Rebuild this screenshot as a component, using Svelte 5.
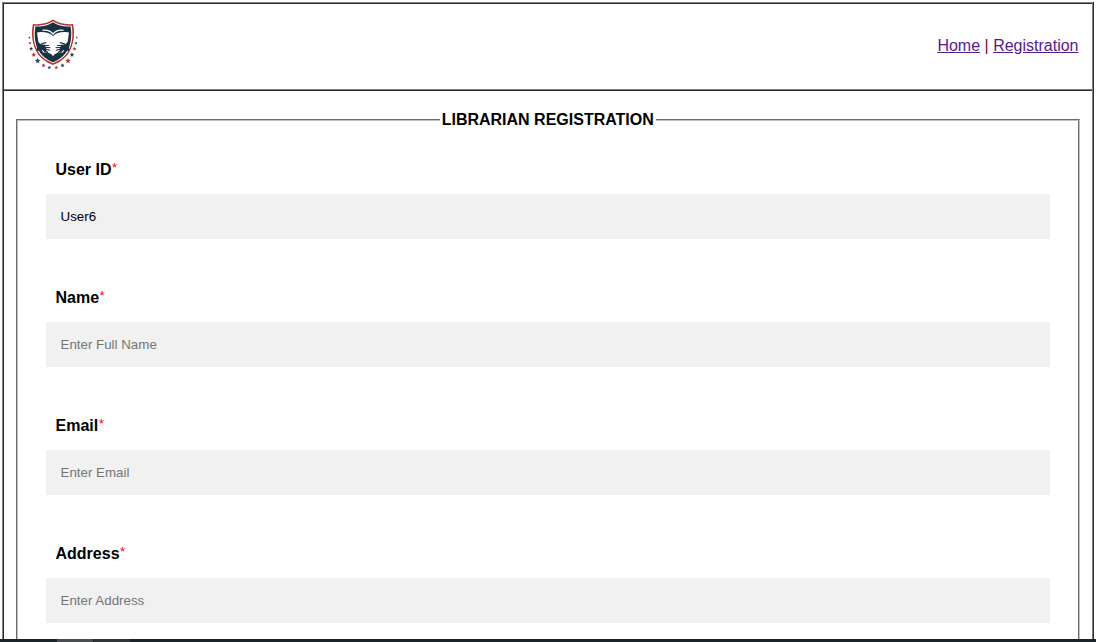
<script>
  const fields = [
    { id: 'userid', label: 'User ID', value: 'User6', placeholder: '' },
    { id: 'name', label: 'Name', value: '', placeholder: 'Enter Full Name' },
    { id: 'email', label: 'Email', value: '', placeholder: 'Enter Email' },
    { id: 'address', label: 'Address', value: '', placeholder: 'Enter Address' }
  ];
  const star = 'M0-1.5.4-.5 1.5-.4.65.3.9 1.4 0 .8-.9 1.4-.65.3-1.5-.4-.4-.5Z';
  const stars = [
    [9.4, 25.5, 0.8, 0], [10, 31, 1.1, 1], [11.2, 36.7, 1.4, 0], [13.7, 42.6, 1.6, 1],
    [17.7, 48.7, 1.9, 0], [23.5, 53.3, 1.4, 1], [29.3, 55.4, 1.3, 0], [36.3, 55.4, 1.3, 1],
    [42.5, 53.3, 1.4, 0], [48, 48.7, 1.9, 1], [52, 42.6, 1.6, 0], [54.5, 36.7, 1.4, 1],
    [56, 31, 1.1, 0], [56.7, 25.5, 0.8, 1]
  ];
</script>

<div class="page">
  <div class="frame">
    <header>
      <svg class="logo" width="66" height="64" viewBox="0 0 66 64" aria-hidden="true">
        <path fill="#b5342f" d="M33 7.6C27.6 11.4 20.8 12.7 13 12 11.2 20 11.7 29.4 15.5 37.8 19 45.3 25.2 50.1 33 53.1 40.8 50.1 47 45.3 50.5 37.8 54.3 29.4 54.8 20 53 12 45.2 12.7 38.4 11.4 33 7.6Z" />
        <path fill="#fff" d="M33 9.3C27.5 12.9 21 14.2 14.4 13.5 12.9 21.5 13.4 30 16.9 37.3 20 44.1 26 48.5 33 51.3 40 48.5 46 44.1 49.1 37.3 52.6 30 53.1 21.5 51.6 13.5 45 14.2 38.5 12.9 33 9.3Z" />
        <path fill="#183244" d="M33 10.2C27.5 13.7 21.8 15 15.4 14.4 14.1 22 14.6 29.8 17.8 36.8 20.8 43.4 26.5 47.6 33 50.3 39.5 47.6 45.2 43.4 48.2 36.8 51.4 29.8 51.9 22 50.6 14.4 44.2 15 38.5 13.7 33 10.2Z" />
        <path fill="#fff" d="M17 20.5 20.5 20Q29 19.8 33 24 37 19.8 45.5 20L49 20.5 47.5 31 43 40.5H39Q35 41 33 44.3 31 41 27 40.5H23L18.5 31Z" />
        <path fill="none" stroke="#fff" stroke-width="1.3" d="M22.5 18.4C27 17.4 30.5 19 33 22 35.5 19 39 17.4 43.5 18.4" />
        <g fill="#183244" stroke="#183244" stroke-linecap="round">
          <path stroke="none" d="M16.5 28.5 20.5 32 25 33 26.5 37.5 25.5 41 22.5 38 17 39ZM49.5 28.5 45.5 32 41 33 39.5 37.5 40.5 41 43.5 38 49 39Z" />
          <path fill="none" stroke-width="1.1" d="M24 33.2 28.5 33.5M25.5 35.2 30 35.7M25.5 37 29.7 38.3M25 38.2 27.8 40.5M21.5 31.8 25.8 30.6M42 33.2 37.5 33.5M40.5 35.2 36 35.7M40.5 37 36.3 38.3M41 38.2 38.2 40.5M44.5 31.8 40.2 30.6" />
        </g>
        {#each stars as [x, y, size, red]}
          <path d={star} fill={red ? '#b6343a' : '#284557'} transform={`translate(${x} ${y}) scale(${size})`} />
        {/each}
      </svg>
      <nav><a href="#home">Home</a> <span>|</span> <a href="#registration">Registration</a></nav>
    </header>
    <main>
      <fieldset>
        <legend>LIBRARIAN REGISTRATION</legend>
        {#each fields as field}
          <div class="field">
            <label for={field.id}>{field.label}<sup>*</sup></label>
            <input id={field.id} type="text" value={field.value} placeholder={field.placeholder} />
          </div>
        {/each}
      </fieldset>
    </main>
  </div>
  <div class="taskbar"><i></i><i></i></div>
</div>

<style>
  :global(body) { margin: 0; background: #fff; }
  .page {
    display: flex;
    flex-direction: column;
    box-sizing: border-box;
    width: 1096px;
    height: 642px;
    padding-top: 2px;
    overflow: hidden;
    font: 16px "Liberation Sans", Arial, sans-serif;
  }
  .frame {
    flex: 1;
    min-height: 0;
    box-sizing: border-box;
    margin: 0 3px 0 2px;
    overflow: hidden;
    border: solid #808080;
    border-width: 1px 1px 0;
    box-shadow: inset 1px 1px #2b2b2e, 1px 0 #2b2b2e;
  }
  header {
    display: flex;
    align-items: center;
    justify-content: space-between;
    box-sizing: border-box;
    height: 88px;
    margin-left: 1px;
    padding: 0 13.5px 3px 16px;
    border-bottom: 1px solid #2b2b2e;
    box-shadow: inset 0 -1px #808080;
  }
  .logo { display: block; margin-top: -2px; }
  nav { padding-top: 2px; color: #800040; white-space: pre; }
  a { color: #551a8b; }
  main { padding: 19px 12px 0 13px; }
  fieldset {
    height: 700px;
    box-sizing: border-box;
    margin: 0;
    padding: 30px 28px 0;
    border: 2px groove #c0c0c0;
  }
  legend {
    margin: 0 auto;
    padding: 0 2.5px 0 2px;
    line-height: 20px;
    font-weight: bold;
  }
  .field { height: 128px; }
  label {
    display: block;
    height: 34px;
    padding-left: 9.5px;
    line-height: 20px;
    font-weight: bold;
  }
  sup {
    margin-left: .5px;
    color: #f00;
    font-size: 13.333px;
    font-weight: normal;
    line-height: 0;
    vertical-align: 3px;
  }
  input {
    display: block;
    box-sizing: border-box;
    width: 100%;
    height: 45px;
    padding: 0 14.5px;
    border: 0;
    outline: 0;
    border-radius: 0;
    background: #f1f1f1;
    color: #000;
    font: 13.333px "Liberation Sans", Arial, sans-serif;
  }
  input::placeholder { color: #757575; opacity: 1; }
  .taskbar {
    display: flex;
    gap: 1px;
    height: 3px;
    padding-left: 57px;
    background: #1b2426;
  }
  .taskbar i { width: 36px; background: #4b4c50; }
  .taskbar i + i { background: #303638; }
</style>
